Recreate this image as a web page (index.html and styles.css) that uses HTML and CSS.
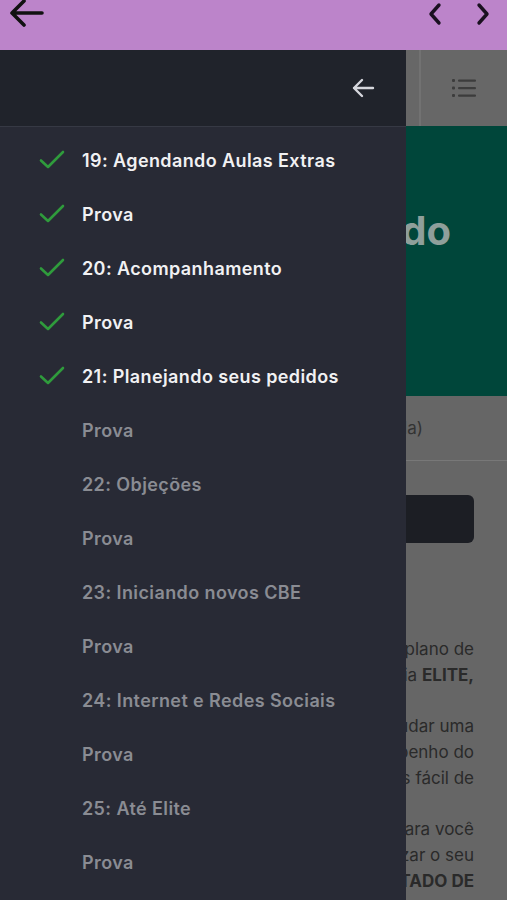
FILE: index.html
```html
<!DOCTYPE html>
<html lang="pt-BR">
<head>
    <meta charset="UTF-8">
    <meta name="viewport" content="width=device-width, initial-scale=1.0">
    <title>Curso - Aulas</title>
    <link rel="stylesheet" href="styles.css">
</head>
<body>

    <!-- Barra do app -->
    <div class="appbar">
        <svg class="appbar-back" width="36" height="30" viewBox="0 0 36 30">
            <path d="M34 14H5M16 2L4 14L16 26" fill="none" stroke="#111" stroke-width="3.6" stroke-linecap="round" stroke-linejoin="round"/>
        </svg>
        <div class="appbar-nav">
            <svg width="16" height="24" viewBox="0 0 16 24">
                <path d="M12 3L4 12L12 21" fill="none" stroke="#1a1020" stroke-width="3.4" stroke-linecap="round" stroke-linejoin="round"/>
            </svg>
            <svg width="16" height="24" viewBox="0 0 16 24">
                <path d="M4 3L12 12L4 21" fill="none" stroke="#1a1020" stroke-width="3.4" stroke-linecap="round" stroke-linejoin="round"/>
            </svg>
        </div>
    </div>

    <div class="screen">

        <!-- Conteúdo da aula (atrás do menu) -->
        <div class="page">
            <div class="page-top">
                <div class="page-top-btn">
                    <svg width="26" height="22" viewBox="0 0 26 22">
                        <g fill="#3c3c3c">
                            <rect x="1" y="2" width="3" height="3" rx="1"/>
                            <rect x="1" y="9.5" width="3" height="3" rx="1"/>
                            <rect x="1" y="17" width="3" height="3" rx="1"/>
                            <rect x="7" y="2.5" width="18" height="2.2" rx="1"/>
                            <rect x="7" y="10" width="18" height="2.2" rx="1"/>
                            <rect x="7" y="17.5" width="18" height="2.2" rx="1"/>
                        </g>
                    </svg>
                </div>
            </div>
            <div class="hero">
                <h1 class="hero-title">Planejando</h1>
            </div>
            <div class="lesson-meta">Aula 21 (concluída)</div>
            <div class="lesson-body">
                <div class="lesson-btn"></div>
                <p>Agora vamos montar o seu plano de<br>pedidos rumo à categoria <b>ELITE,</b></p>
                <p>O planejamento vai te ajudar uma<br>a acompanhar o desempenho do<br>seu grupo e deixar tudo mais fácil de</p>
                <p>Preparamos um material para você<br>aprender a organizar o seu<br>seu pedido. <b>O RESULTADO DE</b></p>
            </div>
        </div>

        <!-- Menu lateral com as aulas -->
        <div class="drawer">
            <div class="drawer-head">
                <svg width="26" height="24" viewBox="0 0 26 24">
                    <path d="M23 12H4M12 4L4 12L12 20" fill="none" stroke="#d6d7dd" stroke-width="2.4" stroke-linecap="round" stroke-linejoin="round"/>
                </svg>
            </div>
            <ul class="lesson-list" id="lessonList"></ul>
        </div>

    </div>

    <script>
        const lessons = [
            { title: '19: Agendando Aulas Extras', done: true },
            { title: 'Prova', done: true },
            { title: '20: Acompanhamento', done: true },
            { title: 'Prova', done: true },
            { title: '21: Planejando seus pedidos', done: true },
            { title: 'Prova', done: false },
            { title: '22: Objeções', done: false },
            { title: 'Prova', done: false },
            { title: '23: Iniciando novos CBE', done: false },
            { title: 'Prova', done: false },
            { title: '24: Internet e Redes Sociais', done: false },
            { title: 'Prova', done: false },
            { title: '25: Até Elite', done: false },
            { title: 'Prova', done: false }
        ];

        const check = '<svg width="26" height="20" viewBox="0 0 26 20"><path d="M2 10.5L9 17L24 2" fill="none" stroke="#2f9b3c" stroke-width="2.6" stroke-linecap="round" stroke-linejoin="round"/></svg>';

        const list = document.getElementById('lessonList');
        lessons.forEach(lesson => {
            const li = document.createElement('li');
            li.className = lesson.done ? 'lesson done' : 'lesson';
            li.innerHTML = `<span class="lesson-icon">${lesson.done ? check : ''}</span><span class="lesson-title">${lesson.title}</span>`;
            list.appendChild(li);
        });
    </script>

</body>
</html>
```

FILE: styles.css
```css
body {
    margin: 0;
    width: 507px;
    height: 900px;
    overflow: hidden;
    font-family: Inter, Lato, "Noto Sans", sans-serif;
    background-color: #666;
}
.appbar {
    height: 50px;
    background-color: #bc84ca;
    display: flex;
    justify-content: space-between;
    align-items: flex-start;
}
.appbar-back {
    margin: -1px 0 0 8px;
}
.appbar-nav {
    display: flex;
    gap: 32px;
    margin: 2px 16px 0 0;
}
.screen {
    position: relative;
    height: 850px;
}

/* pagina atras do menu (ja escurecida) */
.page {
    background-color: #666;
}
.page-top {
    height: 76px;
    background-color: #676767;
    display: flex;
    justify-content: flex-end;
}
.page-top-btn {
    width: 86px;
    border-left: 2px solid #727272;
    display: flex;
    align-items: center;
    justify-content: center;
}
.hero {
    height: 270px;
    background-color: #00463a;
    padding-right: 56px;
    text-align: right;
}
.hero-title {
    margin: 0;
    padding-top: 80px;
    font-size: 40px;
    font-weight: 700;
    color: #8f9f9b;
}
.lesson-meta {
    height: 64px;
    line-height: 64px;
    border-bottom: 1px solid #787878;
    text-align: right;
    padding-right: 84px;
    font-size: 17px;
    color: #333;
}
.lesson-body {
    padding: 34px 33px 0 30px;
    color: #2a2a2a;
    font-size: 17px;
    line-height: 26px;
}
.lesson-btn {
    height: 48px;
    background-color: #1c1e24;
    border-radius: 6px;
    margin-bottom: 93px;
}
.lesson-body p {
    margin: 0 0 25px 0;
    text-align: right;
}

/* menu lateral */
.drawer {
    position: absolute;
    top: 0;
    left: 0;
    width: 406px;
    height: 850px;
    background-color: #282a35;
}
.drawer-head {
    height: 76px;
    background-color: #20232b;
    border-bottom: 1px solid #363944;
    display: flex;
    align-items: center;
    justify-content: flex-end;
    padding-right: 30px;
}
.lesson-list {
    list-style: none;
    margin: 0;
    padding: 6px 0 0 0;
}
.lesson {
    height: 54px;
    display: flex;
    align-items: center;
    padding-left: 39px;
}
.lesson-icon {
    width: 26px;
    height: 20px;
    margin-right: 17px;
}
.lesson-title {
    font-size: 18px;
    font-weight: 600;
    letter-spacing: 0.4px;
    color: #8a8c93;
}
.lesson.done .lesson-title {
    color: #f1f1f3;
}
```
